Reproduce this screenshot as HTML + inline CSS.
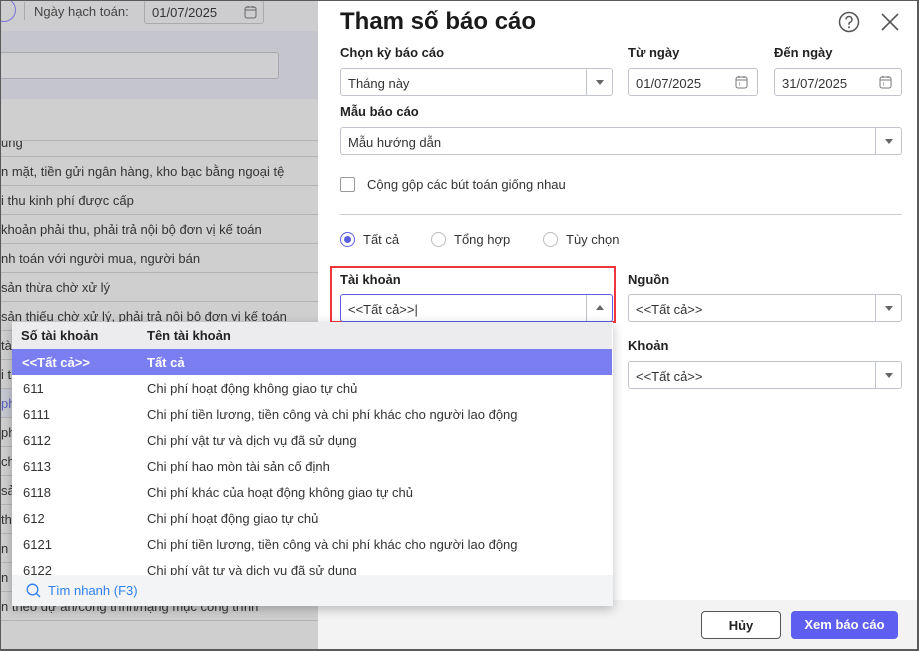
<!DOCTYPE html>
<html><head><meta charset="utf-8"><style>
*{box-sizing:border-box;margin:0;padding:0}
body{width:919px;height:651px;overflow:hidden;font-family:"Liberation Sans","Noto Sans CJK SC",sans-serif;background:#fff;position:relative;font-size:13px;color:#222}
.frame{position:absolute;inset:0;border:1px solid #5a5a5a;border-width:1px 2px 2px 1px;z-index:50;pointer-events:none}
.left{position:absolute;left:0;top:0;width:318px;height:651px;background:#cfcfcf}
.lrow{position:absolute;left:0;width:318px;border-bottom:1px solid #b4b4b4;color:#333;font-size:13px;padding-left:1px}
.modal{position:absolute;left:318px;top:0;width:601px;height:651px;background:#fff}
.abs{position:absolute}
.lbl{position:absolute;font-weight:bold;font-size:13px;color:#222}
.inp{position:absolute;height:28px;border:1px solid #c2c4cc;border-radius:3px;background:#fff;font-size:13px;color:#333;padding:7px 0 0 7px}
.dd{position:absolute;right:0;top:0;width:26px;height:26px;border-left:1px solid #c2c4cc}
.dd:after{content:"";position:absolute;left:9px;top:11px;border:4px solid transparent;border-top:5px solid #666}
.up:after{top:6px;border-top:4px solid transparent;border-bottom:5px solid #666}
.cal{position:absolute;right:9px;top:6px}
.radio{position:absolute;width:15px;height:15px;border:1px solid #bbb;border-radius:50%;background:#fff}
.drop{position:absolute;left:12px;top:322px;width:601px;height:284px;background:#fff;box-shadow:0 3px 10px rgba(0,0,0,.25);z-index:10}
.r{position:absolute;left:0;width:600px;height:26px;font-size:13px;color:#333}
.r span{position:absolute;top:6px}
</style></head><body>
<div class="left">
 <div class="abs" style="left:0;top:0;width:318px;height:31px;background:#cdcdcf"></div>
 <div class="abs" style="left:-8px;top:-2px;width:24px;height:24px;border:1px solid #7b75d8;border-radius:50%"></div>
 <div class="abs" style="left:24px;top:2px;width:1px;height:18px;background:#aaa"></div>
 <div class="abs" style="left:34px;top:4px;font-size:13px;color:#444">Ngày hạch toán:</div>
 <div class="abs" style="left:144px;top:0;width:120px;height:24px;border:1px solid #aaa;border-radius:3px;padding:4px 0 0 7px;font-size:13px;color:#333">01/07/2025
  <svg class="abs" style="right:6px;top:4px" width="13" height="14" viewBox="0 0 13 14"><rect x="1" y="2" width="11" height="11" rx="2" fill="none" stroke="#666"/><path d="M1 5h11M4 1v2M9 1v2" stroke="#666"/></svg></div>
 <div class="abs" style="left:0;top:31px;width:318px;height:68px;background:#c5c6cd"></div>
 <div class="abs" style="left:-5px;top:52px;width:284px;height:27px;border:1px solid #a8a8ae;border-radius:3px;background:#cfcfd2"></div>
 <div class="lrow" style="top:140px;height:17px;border-top:1px solid #b4b4b4;overflow:hidden"><div style="margin-top:-6px">ung</div></div>
 <div class="lrow" style="top:157px;height:29px;padding-top:7px">n mặt, tiền gửi ngân hàng, kho bạc bằng ngoại tệ</div>
 <div class="lrow" style="top:186px;height:29px;padding-top:7px">i thu kinh phí được cấp</div>
 <div class="lrow" style="top:215px;height:29px;padding-top:7px">khoản phải thu, phải trả nội bộ đơn vị kế toán</div>
 <div class="lrow" style="top:244px;height:29px;padding-top:7px">nh toán với người mua, người bán</div>
 <div class="lrow" style="top:273px;height:29px;padding-top:7px">sản thừa chờ xử lý</div>
 <div class="lrow" style="top:302px;height:29px;padding-top:7px">sản thiếu chờ xử lý, phải trả nội bộ đơn vị kế toán</div>
 <div class="lrow" style="top:331px;height:29px;padding-top:7px">tà</div>
 <div class="lrow" style="top:360px;height:29px;padding-top:7px">i t</div>
 <div class="lrow" style="top:389px;height:29px;padding-top:7px;color:#5a5fc0;background:#c6c8d2">ph</div>
 <div class="lrow" style="top:418px;height:29px;padding-top:7px">ph</div>
 <div class="lrow" style="top:447px;height:29px;padding-top:7px">ch</div>
 <div class="lrow" style="top:476px;height:29px;padding-top:7px">sả</div>
 <div class="lrow" style="top:505px;height:29px;padding-top:7px">th</div>
 <div class="lrow" style="top:534px;height:29px;padding-top:7px">n</div>
 <div class="lrow" style="top:563px;height:29px;padding-top:7px">n</div>
 <div class="lrow" style="top:592px;height:29px;padding-top:7px">n theo dự án/công trình/hạng mục công trình</div>
</div>

<div class="modal">
 <div class="abs" style="left:22px;top:8px;font-size:24px;font-weight:bold;color:#1a1a1a">Tham số báo cáo</div>
 <svg class="abs" style="left:520px;top:11px" width="22" height="22" viewBox="0 0 22 22"><circle cx="11" cy="11" r="9.5" fill="none" stroke="#555" stroke-width="1.5"/><path d="M8 8.5a3 3 0 1 1 4 2.8c-.8.4-1 .9-1 1.7v.8" fill="none" stroke="#555" stroke-width="1.5"/><circle cx="11" cy="16.3" r="1" fill="#555"/></svg>
 <svg class="abs" style="left:562px;top:12px" width="20" height="20" viewBox="0 0 20 20"><path d="M2 2l16 16M18 2L2 18" stroke="#555" stroke-width="1.6"/></svg>

 <div class="lbl" style="left:22px;top:45px">Chọn kỳ báo cáo</div>
 <div class="lbl" style="left:310px;top:45px">Từ ngày</div>
 <div class="lbl" style="left:456px;top:45px">Đến ngày</div>
 <div class="inp" style="left:22px;top:68px;width:273px">Tháng này<div class="dd"></div></div>
 <div class="inp" style="left:310px;top:68px;width:130px">01/07/2025<svg class="cal" width="13" height="14" viewBox="0 0 13 14"><rect x="1" y="2" width="11" height="11" rx="2" fill="none" stroke="#777"/><path d="M1 5h11M4 1v2M9 1v2M4 8h1M4 10h1" stroke="#777"/></svg></div>
 <div class="inp" style="left:456px;top:68px;width:128px">31/07/2025<svg class="cal" width="13" height="14" viewBox="0 0 13 14"><rect x="1" y="2" width="11" height="11" rx="2" fill="none" stroke="#777"/><path d="M1 5h11M4 1v2M9 1v2M4 8h1M4 10h1" stroke="#777"/></svg></div>

 <div class="lbl" style="left:22px;top:104px">Mẫu báo cáo</div>
 <div class="inp" style="left:22px;top:127px;width:562px">Mẫu hướng dẫn<div class="dd"></div></div>

 <div class="abs" style="left:22px;top:177px;width:15px;height:15px;border:1px solid #999;border-radius:2px"></div>
 <div class="abs" style="left:49px;top:177px;font-size:13px;color:#333">Cộng gộp các bút toán giống nhau</div>
 <div class="abs" style="left:22px;top:214px;width:562px;height:1px;background:#ccc"></div>

 <div class="radio" style="left:22px;top:232px;border-color:#5b5fe0"><div class="abs" style="left:3px;top:3px;width:7px;height:7px;border-radius:50%;background:#5b5fe0"></div></div>
 <div class="abs" style="left:45px;top:232px;color:#333">Tất cả</div>
 <div class="radio" style="left:113px;top:232px"></div>
 <div class="abs" style="left:136px;top:232px;color:#333">Tổng hợp</div>
 <div class="radio" style="left:225px;top:232px"></div>
 <div class="abs" style="left:248px;top:232px;color:#333">Tùy chọn</div>

 <div class="abs" style="left:12px;top:266px;width:286px;height:57px;border:2px solid #f0363d"></div>
 <div class="lbl" style="left:22px;top:272px">Tài khoản</div>
 <div class="inp" style="left:22px;top:294px;width:273px;border-color:#5b5fe0">&lt;&lt;Tất cả&gt;&gt;|<div class="dd up"></div></div>
 <div class="lbl" style="left:310px;top:272px">Nguồn</div>
 <div class="inp" style="left:310px;top:294px;width:274px">&lt;&lt;Tất cả&gt;&gt;<div class="dd"></div></div>
 <div class="lbl" style="left:310px;top:338px">Khoản</div>
 <div class="inp" style="left:310px;top:361px;width:274px">&lt;&lt;Tất cả&gt;&gt;<div class="dd"></div></div>

 <div class="abs" style="left:0;top:600px;width:601px;height:51px;background:#f3f3f3"></div>
 <div class="abs" style="left:383px;top:611px;width:80px;height:28px;border:1px solid #555;border-radius:4px;background:#fff;text-align:center;padding-top:6px;font-weight:bold;color:#222">Hủy</div>
 <div class="abs" style="left:473px;top:611px;width:107px;height:28px;border-radius:4px;background:#5e5ff0;text-align:center;padding-top:6px;font-weight:bold;color:#fff">Xem báo cáo</div>
</div>

<div class="drop">
 <div class="r" style="top:0;height:27px;background:#ececef;font-weight:bold;color:#222"><span style="left:9px">Số tài khoản</span><span style="left:135px">Tên tài khoản</span></div>
 <div class="r" style="top:27px;background:#7b7ef0;color:#fff;font-weight:bold"><span style="left:10px">&lt;&lt;Tất cả&gt;&gt;</span><span style="left:135px">Tất cả</span></div>
 <div class="r" style="top:53px"><span style="left:11px">611</span><span style="left:135px">Chi phí hoạt động không giao tự chủ</span></div>
 <div class="r" style="top:79px"><span style="left:11px">6111</span><span style="left:135px">Chi phí tiền lương, tiền công và chi phí khác cho người lao động</span></div>
 <div class="r" style="top:105px"><span style="left:11px">6112</span><span style="left:135px">Chi phí vật tư và dịch vụ đã sử dụng</span></div>
 <div class="r" style="top:131px"><span style="left:11px">6113</span><span style="left:135px">Chi phí hao mòn tài sản cố định</span></div>
 <div class="r" style="top:157px"><span style="left:11px">6118</span><span style="left:135px">Chi phí khác của hoạt động không giao tự chủ</span></div>
 <div class="r" style="top:183px"><span style="left:11px">612</span><span style="left:135px">Chi phí hoạt động giao tự chủ</span></div>
 <div class="r" style="top:209px"><span style="left:11px">6121</span><span style="left:135px">Chi phí tiền lương, tiền công và chi phí khác cho người lao động</span></div>
 <div class="r" style="top:235px;height:18px;overflow:hidden"><span style="left:11px">6122</span><span style="left:135px">Chi phí vật tư và dịch vụ đã sử dụng</span></div>
 <div class="abs" style="left:0;top:253px;width:601px;height:31px;background:#f3f4f6">
  <svg class="abs" style="left:14px;top:8px" width="15" height="15" viewBox="0 0 15 15"><circle cx="6.5" cy="6.5" r="5.3" fill="none" stroke="#2f80ed" stroke-width="1.3"/><path d="M10.5 10.5l3.5 3.5" stroke="#2f80ed" stroke-width="1.3"/></svg>
  <div class="abs" style="left:36px;top:8px;color:#2f80ed;font-size:13px">Tìm nhanh (F3)</div>
 </div>
</div>
<div class="frame"></div>
</body></html>
